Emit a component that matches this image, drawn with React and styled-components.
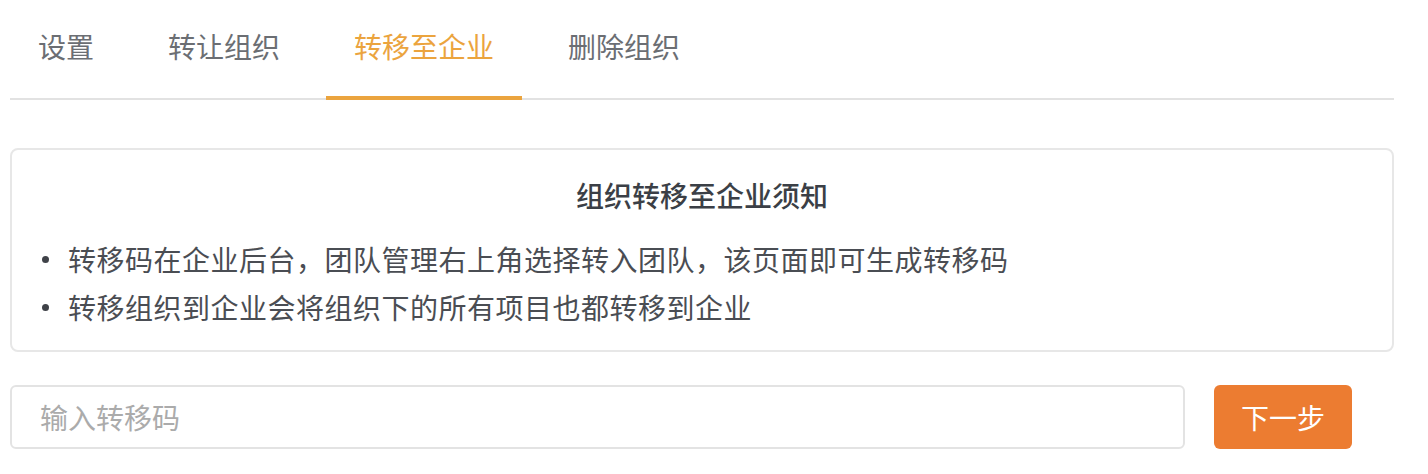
import React, { useState } from 'react'
import styled, { createGlobalStyle } from 'styled-components'

const GlobalStyle = createGlobalStyle`
  body {
    margin: 0;
    background: #ffffff;
    font-family: "Noto Sans CJK SC", "Noto Sans", sans-serif;
  }
`;

const Page = styled.div`
  padding: 0 34px 0 10px;
`;

const TabBar = styled.nav`
  display: flex;
  gap: 18px;
  border-bottom: 2px solid #e2e2e2;
`;

const Tab = styled.div`
  position: relative;
  height: 98px;
  padding: 0 28px 6px;
  box-sizing: border-box;
  display: flex;
  align-items: center;
  font-size: 28px;
  color: ${({ $active }) => ($active ? '#eba43e' : '#6b6e73')};
  cursor: pointer;

  &::after {
    content: '';
    display: ${({ $active }) => ($active ? 'block' : 'none')};
    position: absolute;
    left: 0;
    right: 0;
    bottom: -2px;
    height: 4px;
    background: #eba43e;
  }
`;

const Notice = styled.section`
  margin-top: 48px;
  border: 2px solid #e7e7e7;
  border-radius: 8px;
  padding: 21px 30px 19px;
`;

const NoticeTitle = styled.h3`
  margin: 0;
  text-align: center;
  font-size: 28px;
  line-height: 48px;
  font-weight: 500;
  color: #3b3f46;
`;

const NoticeList = styled.ul`
  margin: 16px 0 0;
  padding: 0;
  list-style: none;
`;

const NoticeItem = styled.li`
  display: flex;
  align-items: center;
  gap: 19px;
  font-size: 28px;
  line-height: 48px;
  letter-spacing: 0.5px;
  color: #4a4d53;
`;

const Dot = styled.span`
  width: 7px;
  height: 7px;
  border-radius: 50%;
  background: #3f4248;
  flex-shrink: 0;
`;

const CodeRow = styled.div`
  margin-top: 33px;
  display: flex;
  gap: 29px;
  padding-right: 42px;
`;

const CodeInput = styled.input`
  flex: 1;
  height: 64px;
  box-sizing: border-box;
  border: 2px solid #e3e3e3;
  border-radius: 6px;
  padding: 0 28px;
  font-family: inherit;
  font-size: 28px;
  color: #333;
  outline: none;

  &::placeholder {
    color: #ababab;
  }
`;

const NextButton = styled.button`
  width: 138px;
  height: 64px;
  border: none;
  border-radius: 6px;
  background: #ec7c31;
  color: #ffffff;
  font-family: inherit;
  font-size: 28px;
  cursor: pointer;
`;

const tabs = ['设置', '转让组织', '转移至企业', '删除组织']

const notes = [
  '转移码在企业后台，团队管理右上角选择转入团队，该页面即可生成转移码',
  '转移组织到企业会将组织下的所有项目也都转移到企业',
]

const App = () => {
  const [active, setActive] = useState(2)

  return (
    <Page>
      <GlobalStyle />
      <TabBar>
        {tabs.map((t, i) => (
          <Tab key={t} $active={i === active} onClick={() => setActive(i)}>
            {t}
          </Tab>
        ))}
      </TabBar>
      <Notice>
        <NoticeTitle>组织转移至企业须知</NoticeTitle>
        <NoticeList>
          {notes.map((n) => (
            <NoticeItem key={n}>
              <Dot />
              {n}
            </NoticeItem>
          ))}
        </NoticeList>
      </Notice>
      <CodeRow>
        <CodeInput placeholder="输入转移码" />
        <NextButton>下一步</NextButton>
      </CodeRow>
    </Page>
  )
}

export default App
